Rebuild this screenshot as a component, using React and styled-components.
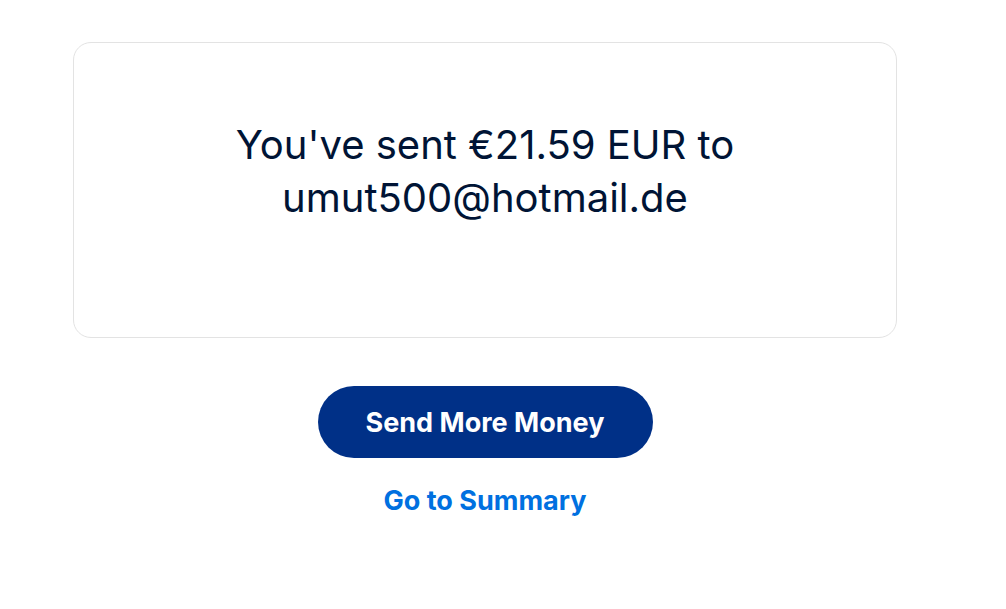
import React from "react";
import styled, { createGlobalStyle } from "styled-components";

const GlobalStyle = createGlobalStyle`
  body {
    margin: 0;
    background: #ffffff;
    font-family: Inter, "Noto Sans", Arial, sans-serif;
  }
`;

const Page = styled.main`
  display: flex;
  flex-direction: column;
  align-items: center;
  width: 824px;
  padding: 42px 0 0 73px;
`;

const Card = styled.section`
  box-sizing: border-box;
  width: 100%;
  height: 296px;
  padding: 75px 40px 0;
  border: 1px solid #e3e3e3;
  border-radius: 18px;
  text-align: center;
`;

const Message = styled.h1`
  margin: 0;
  font-size: 40px;
  font-weight: 400;
  line-height: 53px;
  color: #001435;
`;

const PrimaryButton = styled.button`
  margin-top: 48px;
  width: 335px;
  height: 72px;
  border: none;
  border-radius: 36px;
  background: #003087;
  color: #ffffff;
  font-family: inherit;
  font-size: 27px;
  font-weight: 700;
  cursor: pointer;
`;

const LinkButton = styled.a`
  margin-top: 28px;
  font-size: 27px;
  font-weight: 700;
  line-height: 30px;
  color: #0070e0;
  text-decoration: none;
  cursor: pointer;
`;

export default function App() {
  return (
    <>
      <GlobalStyle />
      <Page>
        <Card>
          <Message>
            You've sent €21.59 EUR to
            <br />
            umut500@hotmail.de
          </Message>
        </Card>
        <PrimaryButton>Send More Money</PrimaryButton>
        <LinkButton>Go to Summary</LinkButton>
      </Page>
    </>
  );
}
